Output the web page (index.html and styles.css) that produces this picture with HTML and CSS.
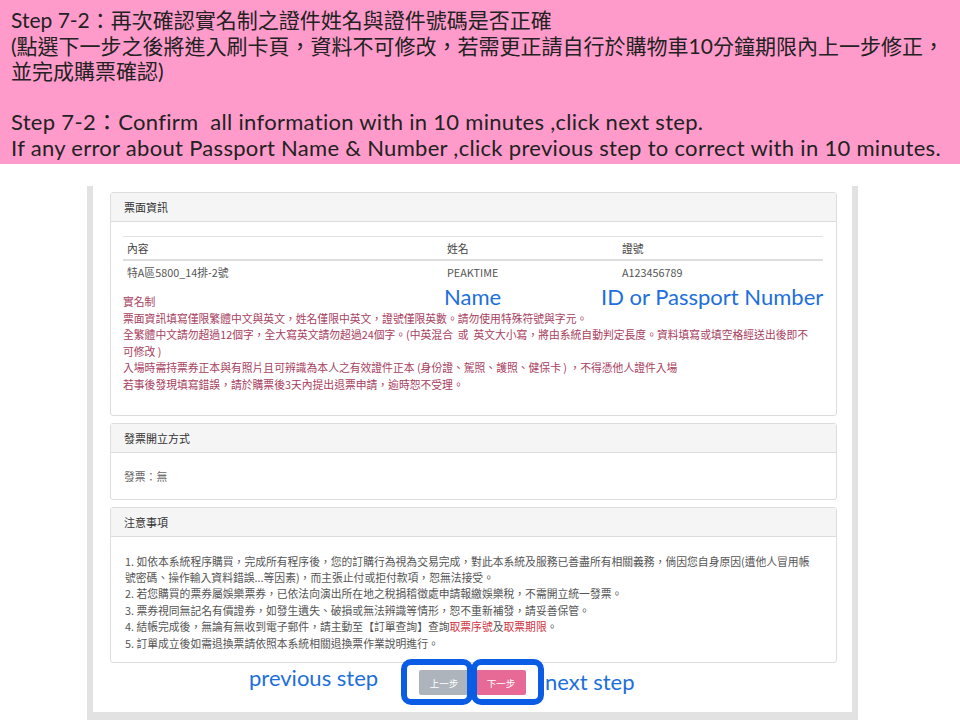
FILE: index.html
```html
<!DOCTYPE html>
<html lang="zh-Hant">
<head>
<meta charset="utf-8">
<title>Step 7-2</title>
<link rel="stylesheet" href="styles.css">
</head>
<body>
<div class="banner">
  <p class="zh">Step 7-2：再次確認實名制之證件姓名與證件號碼是否正確</p>
  <p class="zh">(點選下一步之後將進入刷卡頁，資料不可修改，若需更正請自行於購物車10分鐘期限內上一步修正，</p>
  <p class="zh">並完成購票確認)</p>
  <p class="blank">&nbsp;</p>
  <p class="en">Step 7-2：Confirm&nbsp; all information with in 10 minutes ,click next step.</p>
  <p class="en">If any error about Passport Name &amp; Number ,click previous step to correct with in 10 minutes.</p>
</div>

<div class="frame">
  <section class="panel">
    <div class="panel-head">票面資訊</div>
    <div class="panel-body first">
      <table class="tickets">
        <thead>
          <tr><th class="c1">內容</th><th class="c2">姓名</th><th class="c3">證號</th></tr>
        </thead>
        <tbody>
          <tr><td>特A區5800_14排-2號</td><td>PEAKTIME</td><td>A123456789</td></tr>
        </tbody>
      </table>
      <div class="realname">
        <p>實名制</p>
        <p>票面資訊填寫僅限繁體中文與英文，姓名僅限中英文，證號僅限英數。請勿使用特殊符號與字元。</p>
        <p>全繁體中文請勿超過12個字，全大寫英文請勿超過24個字。(中英混合&nbsp; 或&nbsp; 英文大小寫，將由系統自動判定長度。資料填寫或填空格經送出後即不<br>可修改 )</p>
        <p>入場時需持票券正本與有照片且可辨識為本人之有效證件正本 (身份證、駕照、護照、健保卡 ) ，不得憑他人證件入場</p>
        <p>若事後發現填寫錯誤，請於購票後3天內提出退票申請，逾時恕不受理。</p>
      </div>
    </div>
  </section>

  <section class="panel">
    <div class="panel-head">發票開立方式</div>
    <div class="panel-body plain">發票：無</div>
  </section>

  <section class="panel">
    <div class="panel-head">注意事項</div>
    <div class="panel-body notes">
      <p>1. 如依本系統程序購買，完成所有程序後，您的訂購行為視為交易完成，對此本系統及服務已善盡所有相關義務，倘因您自身原因(遭他人冒用帳<br>號密碼、操作輸入資料錯誤...等因素)，而主張止付或拒付款項，恕無法接受。</p>
      <p>2. 若您購買的票券屬娛樂票券，已依法向演出所在地之稅捐稽徵處申請報繳娛樂稅，不需開立統一發票。</p>
      <p>3. 票券視同無記名有價證券，如發生遺失、破損或無法辨識等情形，恕不重新補發，請妥善保管。</p>
      <p>4. 結帳完成後，無論有無收到電子郵件，請主動至【訂單查詢】查詢<span class="hl">取票序號</span>及<span class="hl">取票期限</span>。</p>
      <p>5. 訂單成立後如需退換票請依照本系統相關退換票作業說明進行。</p>
    </div>
  </section>

  <div class="actions">
    <button class="btn btn-prev" type="button">上一步</button>
    <button class="btn btn-next" type="button">下一步</button>
  </div>

  <span class="note note-name">Name</span>
  <span class="note note-id">ID or Passport Number</span>
  <span class="note note-prev">previous step</span>
  <span class="note note-next">next step</span>
  <span class="mark mark-prev"></span>
  <span class="mark mark-next"></span>
</div>
</body>
</html>
```

FILE: styles.css
```css
html, body {
  margin: 0;
  padding: 0;
  background: #ffffff;
}

body {
  width: 960px;
  height: 720px;
  overflow: hidden;
  font-family: "Noto Sans CJK TC", "Noto Sans", sans-serif;
}

p { margin: 0; }

/* ---------- banner ---------- */
.banner {
  height: 164px;
  box-sizing: border-box;
  padding: 7px 0 0 11px;
  background: #ff9bcb;
  color: #222222;
}

.banner p {
  font-size: 21px;
  line-height: 25.5px;
  white-space: nowrap;
  font-family: "Lato", "Noto Sans CJK TC", sans-serif;
  font-weight: 400;
}

.banner .en {
  font-size: 22px;
  letter-spacing: 0.3px;
}

/* ---------- frame ---------- */
.frame {
  position: relative;
  margin: 22px 0 0 87px;
  padding: 6px 15px 0 17px;
  border: solid #e2e2e2;
  border-width: 0 6px 8px 6px;
  box-sizing: content-box;
  width: 727px;
  height: 520px;
  display: flex;
  flex-direction: column;
  gap: 7px;
}

.panel {
  border: 1px solid #dddddd;
  border-radius: 3px;
  background: #fff;
}

.panel-head {
  height: 28px;
  line-height: 28px;
  padding: 0 13px;
  background: #f5f5f5;
  border-bottom: 1px solid #dddddd;
  font-size: 11px;
  color: #333;
}

.panel-body {
  font-size: 10.8px;
  color: #666;
}

.panel-body.first {
  padding: 14px 13px 22px 12px;
}

.tickets {
  width: 700px;
  border-collapse: collapse;
  font-size: 10.8px;
  color: #555;
}

.tickets th {
  text-align: left;
  font-weight: normal;
  height: 22px;
  padding: 0 4px;
  border-top: 1px solid #e2e2e2;
  border-bottom: 2px solid #dddddd;
  color: #444;
}

.tickets td {
  height: 22px;
  padding: 0 4px;
}

.tickets .c1 { width: 312px; }
.tickets .c2 { width: 167px; }

.realname {
  margin-top: 10px;
  color: #a8405e;
  line-height: 16.6px;
  white-space: nowrap;
}

.panel-body.plain {
  padding: 15px 13px 15px;
  line-height: 16px;
  color: #666;
}

.panel-body.notes {
  padding: 16px 13px 11px 14px;
  line-height: 16.4px;
  color: #555;
  white-space: nowrap;
}

.hl { color: #d0343f; }

/* ---------- buttons ---------- */
.actions {
  display: flex;
  justify-content: center;
  gap: 7px;
  margin-left: -17px;
  margin-right: -15px;
}

.btn {
  height: 25px;
  width: 50px;
  border: 0;
  border-radius: 2px;
  color: #fff;
  font-size: 9.5px;
  font-family: "Noto Sans CJK TC", sans-serif;
  padding: 0;
}

.btn-prev { background: #adb4bc; }
.btn-next { background: #e66a95; }

/* ---------- annotations ---------- */
.note {
  position: absolute;
  font-family: "Lato", sans-serif;
  font-size: 22px;
  line-height: 26px;
  color: #1d6fdc;
  white-space: nowrap;
}

.note-name { left: 351px; top: 98px; }
.note-id   { left: 508px; top: 98px; }
.note-prev { left: 156px; top: 479px; }
.note-next { left: 452px; top: 483px; }

.mark {
  position: absolute;
  top: 473px;
  height: 46px;
  box-sizing: border-box;
  border: 6px solid #0b5ce4;
  border-radius: 10px;
}

.mark-prev { left: 308px; width: 72px; }
.mark-next { left: 378px; width: 73px; }
```
